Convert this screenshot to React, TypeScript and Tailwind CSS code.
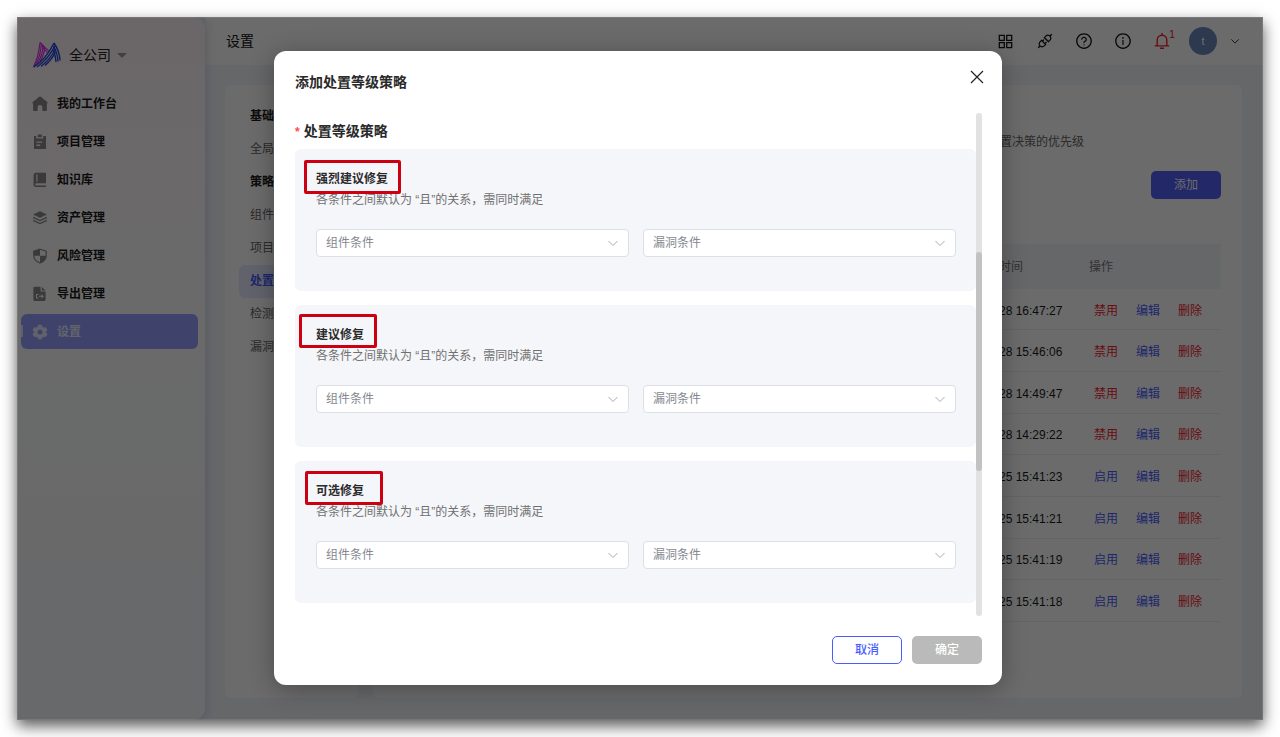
import React from "react";
import {
  AiOutlineApi,
  AiOutlineAppstore,
  AiOutlineInfoCircle,
  AiOutlineQuestionCircle,
} from "react-icons/ai";

const HomeIcon = () => (
  <svg viewBox="0 0 16 16" className="size-4 shrink-0" fill="currentColor" aria-hidden="true">
    <path d="M7.2.8a1.3 1.3 0 0 1 1.6 0l6.4 5.3c.8.7.4 1.5-.3 1.5v6.1c0 .8-.5 1.3-1.3 1.3h-3.2v-3.6a2.4 2.4 0 0 0-4.8 0V15H2.4c-.8 0-1.3-.5-1.3-1.3V7.6c-.7 0-1.1-.8-.3-1.5z" />
  </svg>
);

const ClipboardIcon = () => (
  <svg viewBox="0 0 16 16" className="size-4 shrink-0" aria-hidden="true">
    <path fill="currentColor" fillRule="evenodd" d="M2 2h2.2v2.6h7V2H14v13H2zM4.4 7.4v1.3h5.8V7.4zm0 3.2v1.3h3.8v-1.3z" />
    <path fill="currentColor" d="M5.7.6h4.2v2.6H5.7z" />
  </svg>
);

const BookIcon = () => (
  <svg viewBox="0 0 16 16" className="size-4 shrink-0" aria-hidden="true">
    <path
      fill="currentColor"
      fillRule="evenodd"
      d="M3.6.8H14v10.4H4.4a1.2 1.2 0 0 0 0 2.4H14V15H3.8A2.2 2.2 0 0 1 1.6 13V3A2.2 2.2 0 0 1 3.6.8zM4.3 2.4v7.4h1.2V2.4z"
    />
  </svg>
);

const LayersIcon = () => (
  <svg viewBox="0 0 16 16" className="size-4 shrink-0" aria-hidden="true">
    <path fill="currentColor" d="M8 1.2l7 3.2-7 3.4-7-3.4z" />
    <path fill="none" stroke="currentColor" strokeWidth="1.3" d="M1.1 7.4L8 10.600l6.900-3.200M1.100 10.400L8 13.600l6.900-3.200" />
  </svg>
);

const ShieldIcon = () => (
  <svg viewBox="0 0 16 16" className="size-4 shrink-0" aria-hidden="true">
    <path fill="none" stroke="currentColor" strokeWidth="1.2" d="M8 1.2l6.2 1.9v4.3c0 3.7-2.6 6.2-6.2 7.6-3.6-1.4-6.2-3.9-6.2-7.6V3.1z" />
    <path fill="currentColor" d="M8 1.2v6.6H1.8V3.1zM8 7.8h6.2c-.2 3.5-2.8 5.8-6.2 7.2z" />
  </svg>
);

const ExportIcon = () => (
  <svg viewBox="0 0 16 16" className="size-4 shrink-0" aria-hidden="true">
    <path
      fill="currentColor"
      fillRule="evenodd"
      d="M2.600.8h6v4.600h5v8.400c0 .7-.4 1.200-1.200 1.200H2.600c-.8 0-1.200-.5-1.200-1.200V2c0-.7.4-1.200 1.200-1.200zM4 8v4.600h2.400v-1H5V9h1.400V8zm5.400.2v1.600H7v1h2.400v1.600l2.600-2.100z"
    />
    <path fill="currentColor" d="M9.800.9l3.800 3.500H9.800z" />
  </svg>
);

const GearIcon = () => (
  <svg viewBox="0 0 24 24" className="size-4 shrink-0" fill="currentColor" aria-hidden="true">
    <path
      fillRule="evenodd"
      stroke="currentColor"
      strokeWidth="1.5"
      strokeLinejoin="round"
      d="M9.6 2h4.8l.8 3 2 1.200 3-.9 2.300 4.200-2.200 2.100v1.200l2.200 2.100-2.300 4.200-3-.9-2 1.200-.8 3H9.600l-.8-3-2-1.200-3 .9-2.300-4.200 2.200-2.100v-1.200L1.500 9.500l2.300-4.200 3 .9 2-1.200zM12 7.600a4.600 4.600 0 1 0 0 9.200 4.600 4.600 0 0 0 0-9.200z"
    />
  </svg>
);

const BellIcon = () => (
  <svg viewBox="0 0 18 18" className="size-[18px]" fill="none" stroke="currentColor" strokeWidth="1.4" aria-hidden="true">
    <path d="M9 1v2M4.200 13.800V8a4.800 4.800 0 0 1 9.600 0v5.800M1.800 13.900h14.400M7 16.300h4" />
  </svg>
);

const ChevronIcon = ({ className }: { className: string }) => (
  <svg viewBox="0 0 12 12" className={className} fill="none" stroke="currentColor" aria-hidden="true">
    <path d="M1.500 4L6 8.500 10.500 4" />
  </svg>
);

const Logo = () => (
  <svg viewBox="0 0 28 26" className="h-[26px] w-7 shrink-0" fill="none" aria-hidden="true">
    <g stroke="#dc30e4" strokeWidth="1.2">
      <path d="M7 .5C6 10 4 18 .6 24.600" />
      <path d="M8.400 1C8 10 6 17 2.400 23" />
      <path d="M10 2.400C10 10 8 16 4.400 21.500" />
      <path d="M11.600 4.500C11.600 11 10 15 7 19.500" />
      <path d="M7 .5C10 4 12.500 6.500 15.500 8.500M8.500 4C10 6 12 8 14.300 10.500" />
    </g>
    <g stroke="#2446dc" strokeWidth="1.4">
      <path d="M.5 25.200C9 20 16 11 21 1" />
      <path d="M4 25C11 20 17.500 13 22 3.500" />
      <path d="M8 24.500C14 20 19 14 22.500 7" />
      <path d="M12 23.500C16 20 20 15.500 22.500 10" />
      <path d="M21 1C24.500 6 26.700 12 27 18.500M20.500 4C23.500 9 24.700 14 25 19.500M20 8C22 12 22.800 16 23 20" />
    </g>
  </svg>
);

const navItems = [
  { label: "我的工作台", Icon: HomeIcon },
  { label: "项目管理", Icon: ClipboardIcon },
  { label: "知识库", Icon: BookIcon },
  { label: "资产管理", Icon: LayersIcon },
  { label: "风险管理", Icon: ShieldIcon },
  { label: "导出管理", Icon: ExportIcon },
  { label: "设置", Icon: GearIcon, active: true },
];

const settingItems = [
  { label: "基础", kind: "group" },
  { label: "全局", kind: "item" },
  { label: "策略", kind: "group" },
  { label: "组件", kind: "item" },
  { label: "项目", kind: "item" },
  { label: "处置", kind: "active" },
  { label: "检测", kind: "item" },
  { label: "漏洞", kind: "item" },
];

const rows = [
  { time: "28 16:47:27", enabled: true },
  { time: "28 15:46:06", enabled: true },
  { time: "28 14:49:47", enabled: true },
  { time: "28 14:29:22", enabled: true },
  { time: "25 15:41:23", enabled: false },
  { time: "25 15:41:21", enabled: false },
  { time: "25 15:41:19", enabled: false },
  { time: "25 15:41:18", enabled: false },
];

const levels = [
  { title: "强烈建议修复", mark: "left-[9px] top-[11px] h-[34px] w-[97px]" },
  { title: "建议修复", mark: "left-1 top-[9px] h-[34px] w-[78px]" },
  { title: "可选修复", mark: "left-[10px] top-[10px] h-[34px] w-[78px]" },
];

function Sidebar() {
  return (
    <aside className="z-10 flex w-[188px] shrink-0 flex-col rounded-r-xl bg-linear-to-b from-[#fff5fa] via-[#fdfdfd] via-40% to-[#f6f9fd] shadow-[2px_0_10px_rgba(70,80,140,0.2)]">
      <button type="button" className="flex items-center px-4 pt-[25px] text-left text-sm text-[#222]">
        <Logo />
        <span className="ml-2">全公司</span>
        <span className="ml-1.5 border-x-[5px] border-t-[5px] border-x-transparent border-t-[#999]" />
      </button>
      <nav className="mt-[18px] flex flex-col gap-[3px] pr-[7px] pl-1">
        {navItems.map(({ label, Icon, active }) => (
          <a
            key={label}
            href="#"
            className={
              active
                ? "relative flex h-[35px] items-center gap-[9px] rounded-md bg-[#979fff] px-[11px] font-semibold text-[#eceeff]"
                : "relative flex h-[35px] items-center gap-[9px] px-[11px] font-semibold text-[#1c1c1c]"
            }
          >
            {active && <span className="absolute top-[11px] left-0 h-3 w-0.5 bg-[#dfe2ff]" />}
            <span className={active ? "text-[#e8eaff]" : "text-[#8b8b8b]"}>
              <Icon />
            </span>
            {label}
          </a>
        ))}
      </nav>
    </aside>
  );
}

function TopBar() {
  return (
    <header className="flex h-12 shrink-0 items-center bg-white pr-[23px] pl-[21px] text-[#111]">
      <h1 className="flex-1 text-sm">设置</h1>
      <div className="flex items-center gap-[21px] text-lg">
        <button type="button" aria-label="应用"><AiOutlineAppstore className="size-[19px]" /></button>
        <button type="button" aria-label="插件"><AiOutlineApi /></button>
        <button type="button" aria-label="帮助"><AiOutlineQuestionCircle /></button>
        <button type="button" aria-label="信息"><AiOutlineInfoCircle /></button>
        <button type="button" aria-label="通知" className="relative text-[#f5222d]">
          <BellIcon />
          <span className="absolute -top-1 -right-1 text-[11px] leading-3">1</span>
        </button>
      </div>
      <button type="button" className="ml-[18px] flex items-center gap-[13px]">
        <span className="flex size-7 items-center justify-center rounded-full bg-[#6b89bd] text-[11px] text-white">t</span>
        <ChevronIcon className="size-[10px]" />
      </button>
    </header>
  );
}

function SettingsMenu() {
  return (
    <nav className="w-[133px] shrink-0 rounded-md bg-white px-[14px] py-[15px]">
      {settingItems.map(({ label, kind }) =>
        kind === "group" ? (
          <h2 key={label} className="px-[11px] leading-[33px] font-bold text-[#1c1c1c]">{label}</h2>
        ) : (
          <a
            key={label}
            href="#"
            className={
              kind === "active"
                ? "block rounded-md bg-[#e6eaff] px-[11px] leading-[33px] font-semibold text-[#4a5cff]"
                : "block px-[11px] leading-[33px] text-[#666]"
            }
          >
            {label}
          </a>
        ),
      )}
    </nav>
  );
}

function StrategyTable() {
  return (
    <section className="min-w-0 flex-1 rounded-md bg-white px-[21px] pt-12">
      <p className="pr-[137px] text-right leading-[18px] text-[#666]">置决策的优先级</p>
      <div className="mt-5 flex justify-end">
        <button type="button" className="h-7 w-[70px] rounded-[5px] bg-[#5361f8] text-white">添加</button>
      </div>
      <table className="mt-[45px] h-[378px] w-full table-fixed border-collapse text-left">
        <thead>
          <tr className="h-[45px] bg-[#f2f5fa] text-[#777]">
            <td />
            <th className="w-[90px] px-[10px] font-normal">时间</th>
            <th className="w-[142px] px-[10px] font-normal">操作</th>
          </tr>
        </thead>
        <tbody>
          {rows.map(({ time, enabled }) => (
            <tr key={time} className="border-b border-[#ebeef2]">
              <td />
              <td className="px-[10px] pt-[3px] whitespace-nowrap text-[#1c1c1c]">{time}</td>
              <td className="px-[15px] pt-[3px]">
                <div className="flex gap-[18px]">
                  <button type="button" className={enabled ? "text-[#f5222d]" : "text-[#4a5cff]"}>
                    {enabled ? "禁用" : "启用"}
                  </button>
                  <button type="button" className="text-[#4a5cff]">编辑</button>
                  <button type="button" className="text-[#f5222d]">删除</button>
                </div>
              </td>
            </tr>
          ))}
        </tbody>
      </table>
    </section>
  );
}

function ConditionSelect({ label }: { label: string }) {
  return (
    <div className="grid min-w-0 flex-1 items-center text-[#a8abb2]">
      <select
        aria-label={label}
        className="col-start-1 row-start-1 h-7 w-full appearance-none rounded border border-[#dcdfe6] bg-white px-[9px] text-xs text-[#85888f]"
      >
        <option>{label}</option>
      </select>
      <ChevronIcon className="pointer-events-none col-start-1 row-start-1 mr-[10px] size-3 justify-self-end" />
    </div>
  );
}

function LevelCard({ title, mark }: { title: string; mark: string }) {
  return (
    <section className="relative rounded-md bg-[#f5f6fa] px-5 pt-[19px] pb-[34px] pl-[21px]">
      <h3 className="leading-[22px] font-semibold text-[#2a2a2a]">{title}</h3>
      <p className="leading-5 text-[#707070]">各条件之间默认为 “且”的关系，需同时满足</p>
      <div className="mt-[19px] flex gap-[14px]">
        <ConditionSelect label="组件条件" />
        <ConditionSelect label="漏洞条件" />
      </div>
      <span className={`pointer-events-none absolute rounded-xs border-3 border-[#cc0010] ${mark}`} />
    </section>
  );
}

function StrategyDialog() {
  return (
    <div
      role="dialog"
      aria-modal="true"
      aria-labelledby="dialog-title"
      className="flex w-[728px] flex-col rounded-xl bg-white pt-[21px] pr-5 pb-[21px] pl-[21px] shadow-[0_4px_24px_rgba(0,0,0,0.3)]"
    >
      <div className="flex items-start justify-between">
        <h2 id="dialog-title" className="text-sm leading-5 font-semibold text-[#2a2a2a]">添加处置等级策略</h2>
        <button type="button" aria-label="关闭" className="-mt-0.5 -mr-0.5">
          <svg viewBox="0 0 14 14" className="size-[14px]" fill="none" stroke="#222" strokeWidth="1.2" aria-hidden="true">
            <path d="M1 1l12 12M13 1L1 13" />
          </svg>
        </button>
      </div>
      <div className="mt-[21px] flex">
        <div className="min-w-0 flex-1 pt-2 pb-[13px]">
          <p className="text-sm leading-5 font-semibold text-[#2a2a2a]">
            <span className="mr-1 text-xs text-[#ff4d4f]">*</span>
            处置等级策略
          </p>
          <div className="mt-2 flex flex-col gap-[14px]">
            {levels.map((level) => (
              <LevelCard key={level.title} {...level} />
            ))}
          </div>
        </div>
        <div className="flex w-1.5 flex-col rounded-full bg-[#e2e2e2] pt-[139px]">
          <div className="h-[219px] rounded-full bg-[#c2c2c2]" />
        </div>
      </div>
      <div className="mt-5 flex justify-end gap-[10px]">
        <button type="button" className="h-7 w-[70px] rounded-[5px] border border-[#4a5cff] font-medium text-[#4a5cff]">取消</button>
        <button type="button" className="h-7 w-[70px] rounded-[5px] bg-[#bababa] font-medium text-white">确定</button>
      </div>
    </div>
  );
}

export default function App() {
  return (
    <div className="flex min-h-screen bg-white p-[17px] font-['Liberation_Sans','Noto_Sans_CJK_SC',sans-serif] text-xs">
      <div className="relative flex min-w-0 flex-1 overflow-hidden bg-[#f3f6fb] shadow-[0_6px_14px_rgba(0,0,0,0.65)]">
        <Sidebar />
        <div className="flex min-w-0 flex-1 flex-col">
          <TopBar />
          <main className="flex flex-1 gap-[15px] pt-5 pr-[21px] pb-[22px] pl-5">
            <SettingsMenu />
            <StrategyTable />
          </main>
        </div>
        <div className="absolute inset-0 z-20 flex items-center justify-center border border-white/10 bg-black/58 pr-1 pb-0.5">
          <StrategyDialog />
        </div>
      </div>
    </div>
  );
}
